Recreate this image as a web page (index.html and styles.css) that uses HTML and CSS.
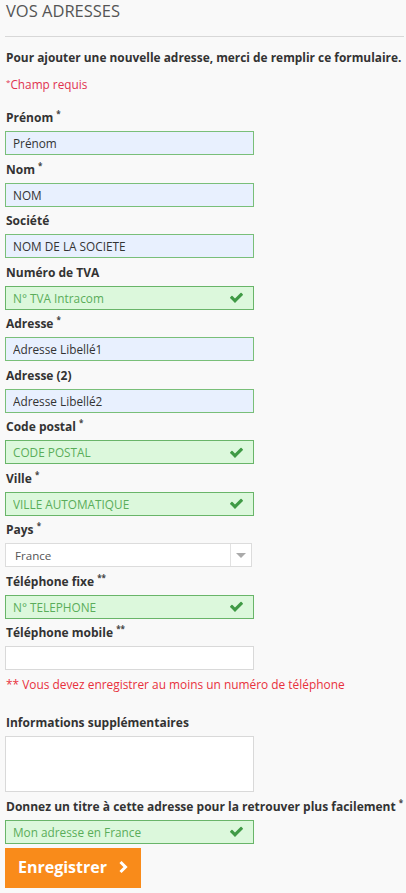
FILE: index.html
```html
<!DOCTYPE html>
<html lang="fr">
<head>
  <meta charset="UTF-8" />
  <meta name="viewport" content="width=device-width, initial-scale=1.0"/>
  <title>Vos adresses</title>
  <link rel="stylesheet" href="styles.css">
</head>
<body>
  <div class="page">
    <h1 class="page-title">Vos adresses</h1>

    <form class="address-form">
      <p class="intro">Pour ajouter une nouvelle adresse, merci de remplir ce formulaire.</p>
      <p class="required-note"><sup>*</sup>Champ requis</p>

      <div class="field">
        <label for="prenom">Prénom <sup>*</sup></label>
        <input id="prenom" class="autofill" type="text" value="Prénom">
      </div>

      <div class="field">
        <label for="nom">Nom <sup>*</sup></label>
        <input id="nom" class="autofill" type="text" value="NOM">
      </div>

      <div class="field">
        <label for="societe">Société</label>
        <input id="societe" class="autofill" type="text" value="NOM DE LA SOCIETE">
      </div>

      <div class="field">
        <label for="tva">Numéro de TVA</label>
        <div class="input-valid">
          <input id="tva" type="text" value="N° TVA Intracom">
          <svg class="check" viewBox="0 0 1792 1792"><path d="M1671 566q0 40-28 68l-724 724-136 136q-28 28-68 28t-68-28l-136-136-362-362q-28-28-28-68t28-68l136-136q28-28 68-28t68 28l294 295 656-657q28-28 68-28t68 28l136 136q28 28 28 68z"/></svg>
        </div>
      </div>

      <div class="field">
        <label for="adresse1">Adresse <sup>*</sup></label>
        <input id="adresse1" class="autofill" type="text" value="Adresse Libellé1">
      </div>

      <div class="field">
        <label for="adresse2">Adresse (2)</label>
        <input id="adresse2" class="autofill" type="text" value="Adresse Libellé2">
      </div>

      <div class="field">
        <label for="cp">Code postal <sup>*</sup></label>
        <div class="input-valid">
          <input id="cp" type="text" value="CODE POSTAL">
          <svg class="check" viewBox="0 0 1792 1792"><path d="M1671 566q0 40-28 68l-724 724-136 136q-28 28-68 28t-68-28l-136-136-362-362q-28-28-28-68t28-68l136-136q28-28 68-28t68 28l294 295 656-657q28-28 68-28t68 28l136 136q28 28 28 68z"/></svg>
        </div>
      </div>

      <div class="field">
        <label for="ville">Ville <sup>*</sup></label>
        <div class="input-valid">
          <input id="ville" type="text" value="VILLE AUTOMATIQUE">
          <svg class="check" viewBox="0 0 1792 1792"><path d="M1671 566q0 40-28 68l-724 724-136 136q-28 28-68 28t-68-28l-136-136-362-362q-28-28-28-68t28-68l136-136q28-28 68-28t68 28l294 295 656-657q28-28 68-28t68 28l136 136q28 28 28 68z"/></svg>
        </div>
      </div>

      <div class="field">
        <label for="pays">Pays <sup>*</sup></label>
        <div class="select-box">
          <select id="pays">
            <option>France</option>
          </select>
          <span class="select-arrow"></span>
        </div>
      </div>

      <div class="field">
        <label for="tel">Téléphone fixe <sup>**</sup></label>
        <div class="input-valid">
          <input id="tel" type="text" value="N° TELEPHONE">
          <svg class="check" viewBox="0 0 1792 1792"><path d="M1671 566q0 40-28 68l-724 724-136 136q-28 28-68 28t-68-28l-136-136-362-362q-28-28-28-68t28-68l136-136q28-28 68-28t68 28l294 295 656-657q28-28 68-28t68 28l136 136q28 28 28 68z"/></svg>
        </div>
      </div>

      <div class="field">
        <label for="mobile">Téléphone mobile <sup>**</sup></label>
        <input id="mobile" type="text" value="">
      </div>

      <p class="phone-note">** Vous devez enregistrer au moins un numéro de téléphone</p>

      <div class="field">
        <label for="infos">Informations supplémentaires</label>
        <textarea id="infos"></textarea>
      </div>

      <div class="field">
        <label for="alias">Donnez un titre à cette adresse pour la retrouver plus facilement <sup>*</sup></label>
        <div class="input-valid">
          <input id="alias" type="text" value="Mon adresse en France">
          <svg class="check" viewBox="0 0 1792 1792"><path d="M1671 566q0 40-28 68l-724 724-136 136q-28 28-68 28t-68-28l-136-136-362-362q-28-28-28-68t28-68l136-136q28-28 68-28t68 28l294 295 656-657q28-28 68-28t68 28l136 136q28 28 28 68z"/></svg>
        </div>
      </div>

      <button type="button" class="btn-save">
        Enregistrer
        <svg class="chevron" viewBox="0 0 10 14"><polyline points="2.5,2 7.5,7 2.5,12"/></svg>
      </button>
    </form>
  </div>
</body>
</html>
```

FILE: styles.css
```css
body {
  margin: 0;
  background-color: #f9f9f9;
  font-family: "Open Sans", "DejaVu Sans", sans-serif;
  color: #333;
}
.page {
  padding: 0 2px 0 5px;
}
.page-title {
  margin: 0;
  padding: 0 1px 14px;
  font-size: 16.5px;
  line-height: 22px;
  font-weight: normal;
  text-transform: uppercase;
  color: #555;
  border-bottom: 1px solid #d8d8d8;
}
.intro {
  margin: 11px 0 0 1px;
  font-size: 11.9px;
  line-height: 18px;
  font-weight: bold;
  white-space: nowrap;
}
.required-note {
  margin: 9px 0 15px 1px;
  font-size: 11.8px;
  line-height: 18px;
  color: #e0334f;
}
sup {
  line-height: 0;
}
.required-note sup {
  font-size: 8px;
  vertical-align: 4px;
}
.field {
  margin-bottom: 4.5px;
}
.field label {
  display: block;
  margin: 0 0 3px 1px;
  font-size: 12px;
  line-height: 20px;
  font-weight: bold;
  color: #333;
  white-space: nowrap;
}
.field label sup {
  font-size: 8px;
  vertical-align: 5px;
  color: #444;
}
input, textarea, select {
  font-family: "Open Sans", "DejaVu Sans", sans-serif;
}
.field input {
  box-sizing: border-box;
  display: block;
  width: 249px;
  height: 24px;
  margin: 0;
  padding: 0 7px;
  font-size: 11.8px;
  color: #333;
  background: #fff;
  border: 1px solid #d9d9d9;
  outline: none;
}
.field input.autofill {
  background: #e8f0fe;
  border-color: #79bf79;
}
.input-valid {
  box-sizing: border-box;
  display: flex;
  align-items: center;
  width: 249px;
  height: 24px;
  padding-right: 9px;
  background: #dcf8dc;
  border: 1px solid #69b569;
}
.input-valid input {
  flex: 1;
  width: auto;
  height: 22px;
  min-width: 0;
  border: none;
  background: transparent;
  color: #5aad5a;
}
.check {
  width: 15px;
  height: 15px;
  fill: #3f9a45;
}
.select-box {
  box-sizing: border-box;
  display: flex;
  width: 247px;
  height: 24px;
  background: #fff;
  border: 1px solid #dcdcdc;
}
.select-box select {
  flex: 1;
  appearance: none;
  -webkit-appearance: none;
  border: none;
  outline: none;
  background: transparent;
  padding: 0 9px;
  font-size: 11.6px;
  color: #555;
}
.select-arrow {
  width: 20px;
  border-left: 1px solid #e2e2e2;
  display: flex;
  align-items: center;
  justify-content: center;
}
.select-arrow::after {
  content: "";
  border-left: 5px solid transparent;
  border-right: 5px solid transparent;
  border-top: 5px solid #aaa;
}
.phone-note {
  margin: 5px 0 20px 1px;
  font-size: 11.9px;
  line-height: 18px;
  color: #e8313c;
}
.field textarea {
  box-sizing: border-box;
  display: block;
  width: 249px;
  height: 56px;
  margin: 0;
  background: #fff;
  border: 1px solid #d9d9d9;
  resize: none;
}
.btn-save {
  margin-top: 1px;
  width: 136px;
  height: 40px;
  padding: 0 0 2px;
  background-color: #f98b1a;
  border: none;
  color: #fff;
  font-family: "Open Sans", "DejaVu Sans", sans-serif;
  font-size: 16px;
  font-weight: bold;
  display: flex;
  align-items: center;
  justify-content: center;
  gap: 11px;
}
.chevron {
  width: 10px;
  height: 14px;
  fill: none;
  stroke: #fff;
  stroke-width: 3;
}
```
